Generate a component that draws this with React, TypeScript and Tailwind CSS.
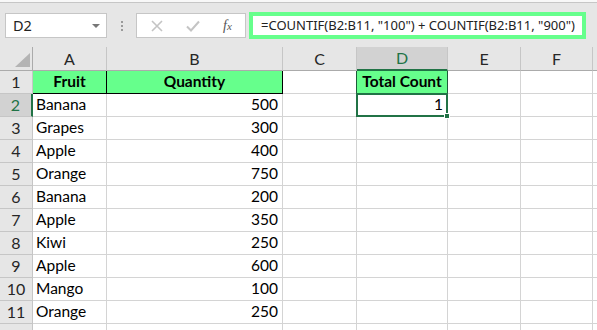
import React from "react";

// Excel sheet: formula bar over a small Fruit / Quantity table, D2 selected.

const COLS = ["A", "B", "C", "D", "E", "F"];

const ROWS: [string, number][] = [
  ["Banana", 500],
  ["Grapes", 300],
  ["Apple", 400],
  ["Orange", 750],
  ["Banana", 200],
  ["Apple", 350],
  ["Kiwi", 250],
  ["Apple", 600],
  ["Mango", 100],
  ["Orange", 250],
];

const cellFont = { fontFamily: "Lato, 'Open Sans', sans-serif" };
const uiFont = { fontFamily: "'Noto Sans', 'Open Sans', sans-serif" };

function Cell({
  children,
  className = "",
}: {
  children?: React.ReactNode;
  className?: string;
}) {
  return (
    <div
      className={`flex h-[23px] items-center border-r border-b border-[#d4d4d4] text-[15.5px] text-black ${className}`}
    >
      {children}
    </div>
  );
}

function RowHead({ n, active }: { n?: number; active?: boolean }) {
  return (
    <div
      className={`flex h-[23px] items-center justify-center border-b text-[16px] ${
        active
          ? "border-r-2 border-b-[#c6c6c6] border-r-[#217346] bg-[#d2d2d2] text-[#217346]"
          : "border-r border-[#c6c6c6] bg-[#e6e6e6] text-[#262626]"
      }`}
    >
      {n}
    </div>
  );
}

export default function App() {
  return (
    <div
      className="h-[330px] w-[597px] overflow-hidden bg-white"
      style={cellFont}
    >
      {/* sliver of the ribbon above */}
      <div className="h-[3px] border-b border-[#c6c6c6] bg-[#f8f8f8]" />

      {/* formula bar */}
      <div className="flex h-[44px] items-start bg-[#e6e6e6] pl-[5px]" style={uiFont}>
        <div className="mt-[10px] flex h-[25px] w-[102px] items-center justify-between border border-[#c6c6c6] bg-white pl-[7px] pr-[6px] text-[14.5px] text-[#222]">
          <span>D2</span>
          <span className="h-0 w-0 border-x-[4px] border-t-[4px] border-x-transparent border-t-[#777]" />
        </div>
        <div className="mt-[18px] ml-[14px] flex w-[2px] flex-col gap-[2px]">
          <span className="h-[2px] w-[2px] bg-[#9a9a9a]" />
          <span className="h-[2px] w-[2px] bg-[#9a9a9a]" />
          <span className="h-[2px] w-[2px] bg-[#9a9a9a]" />
        </div>
        <div className="mt-[10px] ml-[13px] flex h-[25px] w-[110px] items-center border border-[#c6c6c6] bg-white">
          <svg width="12" height="12" viewBox="0 0 12 12" className="ml-[14px]">
            <path d="M1 1 L11 11 M11 1 L1 11" stroke="#c4c4c4" strokeWidth="1.6" />
          </svg>
          <svg width="14" height="12" viewBox="0 0 14 12" className="ml-[23px]">
            <path d="M1 6.5 L5 10.5 L13 1.5" fill="none" stroke="#c4c4c4" strokeWidth="2" />
          </svg>
          <span
            className="ml-[23px] text-[14px] italic text-[#555]"
            style={{ fontFamily: "'Liberation Serif', serif" }}
          >
            f<span className="text-[11px]">x</span>
          </span>
        </div>
        <div className="mt-[9px] ml-[3px] flex h-[27px] w-[337px] items-center border-[4px] border-[#66ff8c] bg-white pl-[8px] text-[13px] whitespace-nowrap text-[#222]">
          =COUNTIF(B2:B11, "100") + COUNTIF(B2:B11, "900")
        </div>
      </div>

      {/* sheet */}
      <div className="grid grid-cols-[33px_74px_176px_74px_91px_73px_72px_1fr]">
        {/* column headers */}
        <div className="relative h-[24px] border-r border-b border-[#ababab] bg-[#e6e6e6]">
          <svg width="15" height="14" viewBox="0 0 15 14" className="absolute right-[2px] bottom-[3px]">
            <path d="M15 0 L15 14 L0 14 Z" fill="#b4b4b4" />
          </svg>
        </div>
        {COLS.map((c) => (
          <div
            key={c}
            className={`flex h-[24px] items-center justify-center border-r text-[16px] ${
              c === "D"
                ? "border-b-2 border-r-[#c6c6c6] border-b-[#217346] bg-[#d2d2d2] text-[#217346]"
                : "border-b border-r-[#c6c6c6] border-b-[#ababab] bg-[#e6e6e6] text-[#262626]"
            }`}
          >
            {c}
          </div>
        ))}
        <div className="h-[24px] border-b border-[#ababab] bg-[#e6e6e6]" />

        {/* row 1 */}
        <RowHead n={1} />
        <div className="flex h-[23px] items-center justify-center border-r border-b border-black bg-[#66ff8c] text-[15.5px] font-bold text-black">
          Fruit
        </div>
        <div className="flex h-[23px] items-center justify-center border-r border-b border-black bg-[#66ff8c] text-[15.5px] font-bold text-black">
          Quantity
        </div>
        <Cell />
        <div className="-ml-px flex h-[23px] items-center justify-center border-x border-b border-[#1e5c3a] bg-[#66ff8c] text-[15.5px] font-bold text-black">
          Total Count
        </div>
        <Cell />
        <Cell />
        <Cell className="border-r-0" />

        {ROWS.map(([fruit, qty], i) => {
          const row = i + 2;
          return (
            <React.Fragment key={row}>
              <RowHead n={row} active={row === 2} />
              <Cell className="pl-[3px]">{fruit}</Cell>
              <Cell className="justify-end pr-[4px]">{qty}</Cell>
              <Cell />
              {row === 2 ? (
                <div className="relative -mt-px -ml-px flex h-[24px] items-center justify-end border-2 border-[#217346] pr-[3px] text-[15.5px] text-black">
                  1
                  <span className="absolute -right-[4px] -bottom-[4px] h-[6px] w-[6px] border border-white bg-[#217346]" />
                </div>
              ) : (
                <Cell />
              )}
              <Cell />
              <Cell />
              <Cell className="border-r-0" />
            </React.Fragment>
          );
        })}
        {/* top of row 12, cut by the window */}
        <RowHead />
        <Cell />
        <Cell />
        <Cell />
        <Cell />
        <Cell />
        <Cell />
        <Cell className="border-r-0" />
      </div>
    </div>
  );
}
